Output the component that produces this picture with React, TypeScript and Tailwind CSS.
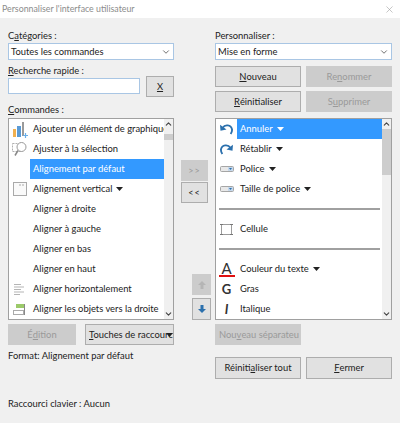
import type { ReactNode } from 'react';
import { ChevronDown, ChevronUp, X } from 'lucide-react';

const U = ({ children }: { children: ReactNode }) => <span className="underline underline-offset-1">{children}</span>;

const Caret = () => (
  <svg width="7" height="4" viewBox="0 0 7 4" className="ml-[4px] shrink-0">
    <path d="M0 0h7L3.500 4z" fill="currentColor" />
  </svg>
);

const ChartIcon = () => (
  <svg width="16" height="17" viewBox="0 0 16 17">
    <rect x="1" y="8" width="3" height="8" fill="#f0b050" />
    <rect x="5" y="5" width="4" height="11" fill="#5b9bd5" />
    <rect x="10" y="1" width="2" height="14" fill="#9a9a9a" />
    <path d="M11 14.500h5M13.500 12v5" stroke="#6aaee8" strokeWidth="1.200" />
  </svg>
);

const ZoomIcon = () => (
  <svg width="16" height="16" viewBox="0 0 16 16" fill="none">
    <rect x="0.500" y="2.500" width="9" height="8" stroke="#b0b0b0" strokeDasharray="2 1" />
    <circle cx="9.500" cy="6" r="4.500" fill="#fff" stroke="#999" />
    <path d="M6 9.500l-3 5" stroke="#888" strokeWidth="1.500" />
  </svg>
);

const PageIcon = () => (
  <svg width="14" height="14" viewBox="0 0 14 14" fill="none">
    <rect x="0.500" y="0.500" width="13" height="13" fill="#fafafa" stroke="#aaa" />
    <path d="M6 3h6" stroke="#aaa" strokeDasharray="2 1" />
  </svg>
);

const AlignIcon = () => (
  <svg width="11" height="11" viewBox="0 0 11 11">
    <path d="M0 .5h7M0 3h10M0 5.500h7M0 8h10M0 10.500h6" stroke="#b5b5b5" />
  </svg>
);

const ObjectsIcon = () => (
  <svg width="13" height="11" viewBox="0 0 13 11" fill="none">
    <rect x="3" y="0" width="8" height="4" fill="#9cca6a" />
    <rect x="0.500" y="6.500" width="10" height="4" fill="#fff" stroke="#aaa" />
    <path d="M11.500 0v11" stroke="#888" />
  </svg>
);

const UndoIcon = ({ flip }: { flip?: boolean }) => (
  <svg width="13" height="12" viewBox="0 0 14 13" fill="none" className={flip ? '-scale-x-100' : ''}>
    <path d="M3 5C5 1.500 12 1.500 13 7c.200 2-.500 3.500-1.500 5" stroke="#2b70ad" strokeWidth="2" />
    <path d="M0 2l.500 6.500L7 7z" fill="#2b70ad" />
  </svg>
);

const FieldIcon = () => (
  <svg width="14" height="6" viewBox="0 0 14 6">
    <rect x="0.500" y="0.500" width="13" height="5" rx="1" fill="#e8e8e8" stroke="#a5a5a5" />
    <rect x="8" y="1" width="5" height="4" fill="#c5d8ec" />
    <path d="M9 2h3L10.500 4z" fill="#2b70ad" />
  </svg>
);

const CellIcon = () => (
  <svg width="13" height="13" viewBox="0 0 13 13" fill="none">
    <rect x="1.500" y="1.500" width="10" height="10" stroke="#9c9c9c" />
    <path d="M0 1.500h3M0 11.500h3M10 1.500h3M10 11.500h3" stroke="#777" />
  </svg>
);

type Row = { label: string; icon?: ReactNode; caret?: boolean; active?: boolean; separator?: boolean };

const commands: Row[] = [
  { label: 'Ajouter un élément de graphique', icon: <ChartIcon /> },
  { label: 'Ajuster à la sélection', icon: <ZoomIcon /> },
  { label: 'Alignement par défaut', active: true },
  { label: 'Alignement vertical', icon: <PageIcon />, caret: true },
  { label: 'Aligner à droite' },
  { label: 'Aligner à gauche' },
  { label: 'Aligner en bas' },
  { label: 'Aligner en haut' },
  { label: 'Aligner horizontalement', icon: <AlignIcon /> },
  { label: 'Aligner les objets vers la droite', icon: <ObjectsIcon /> },
];

const toolbar: Row[] = [
  { label: 'Annuler', icon: <UndoIcon />, caret: true, active: true },
  { label: 'Rétablir', icon: <UndoIcon flip />, caret: true },
  { label: 'Police', icon: <FieldIcon />, caret: true },
  { label: 'Taille de police', icon: <FieldIcon />, caret: true },
  { label: '', separator: true },
  { label: 'Cellule', icon: <CellIcon /> },
  { label: '', separator: true },
  {
    label: 'Couleur du texte',
    caret: true,
    icon: (
      <span className="flex flex-col items-center text-[15px] leading-[13px] text-[#333]">
        A<span className="h-[2px] w-[16px] bg-[#e01010]" />
      </span>
    ),
  },
  { label: 'Gras', icon: <span className="text-[13px] font-bold text-[#333]">G</span> },
  { label: 'Italique', icon: <span className="text-[13px] font-bold italic text-[#333]">I</span> },
];

function ListBox({ rows, thumbTop, thumbHeight }: { rows: Row[]; thumbTop: string; thumbHeight: string }) {
  return (
    <div className="flex h-[202px] border border-[#a0a0a0] bg-white">
      <div className="min-w-0 flex-1 overflow-hidden">
        {rows.map((row, i) =>
          row.separator ? (
            <div key={i} className="flex h-[20px] items-center pl-[3px] pr-[2px]">
              <div className="h-[2px] w-full bg-[#a0a0a0]" />
            </div>
          ) : (
            <div key={i} className="flex h-[20px]">
              <div className="flex w-[21px] shrink-0 items-center justify-center">{row.icon}</div>
              <div
                className={`flex min-w-0 flex-1 items-center whitespace-nowrap pl-[3px] ${
                  row.active ? 'bg-[#3399ff] text-white' : ''
                }`}
              >
                {row.label}
                {row.caret && <Caret />}
              </div>
            </div>
          )
        )}
      </div>
      <div className="flex w-[9px] shrink-0 flex-col bg-[#f0f0f0]">
        <ChevronUp size={9} strokeWidth={3} className="h-[10px] shrink-0 text-[#444]" />
        <div className={`flex-1 ${thumbTop}`}>
          <div className={`bg-[#cdcdcd] ${thumbHeight}`} />
        </div>
        <ChevronDown size={9} strokeWidth={3} className="h-[10px] shrink-0 text-[#444]" />
      </div>
    </div>
  );
}

function Combo({ value }: { value: string }) {
  return (
    <div className="flex h-[17px] items-center justify-between border border-[#a9c6e4] bg-white pl-[2px] pr-[2px]">
      {value}
      <ChevronDown size={10} className="text-[#555]" />
    </div>
  );
}

function Btn({ children, disabled, className = '' }: { children: ReactNode; disabled?: boolean; className?: string }) {
  return (
    <div
      className={`flex h-[21px] items-center justify-center whitespace-nowrap border ${
        disabled ? 'border-[#cccccc] bg-[#cccccc] text-[#9a9a9a]' : 'border-[#adadad] bg-[#e1e1e1]'
      } ${className}`}
    >
      {children}
    </div>
  );
}

export default function App() {
  return (
    <div className="h-[423px] w-[400px] overflow-hidden bg-[#f0f0f0] font-['Lato',sans-serif] text-[9.400px] leading-[14px] text-[#222]">
      <div className="flex h-[18px] items-center justify-between bg-white pl-[2px] pr-[5px] text-[8.800px] text-[#8c8c8c]">
        <span>Personnaliser l'interface utilisateur</span>
        <X size={11} strokeWidth={1.2} className="text-[#999]" />
      </div>

      <div className="flex pl-[8px]">
        {/* Left column */}
        <div className="w-[166px] shrink-0">
          <div className="mt-[11px] h-[14px]">C<U>a</U>tégories :</div>
          <Combo value="Toutes les commandes" />
          <div className="mt-[4px] h-[14px]"><U>R</U>echerche rapide :</div>
          <div className="-mt-[2px] flex items-start justify-between">
            <div className="mt-[2px] h-[16px] w-[132px] border border-[#a9c6e4] bg-white" />
            <Btn className="w-[28px]"><U>X</U></Btn>
          </div>
          <div className="mt-[6px] h-[15px]"><U>C</U>ommandes :</div>
          <ListBox rows={commands} thumbTop="pt-[5px]" thumbHeight="h-[6px]" />
          <div className="mt-[4px] flex justify-between">
            <Btn disabled className="w-[68px]">É<U>d</U>ition</Btn>
            <Btn className="relative w-[89px] justify-start overflow-hidden pl-[3px]">
              <span><U>T</U>ouches de raccourc</span>
              <span className="absolute right-0 top-[8px] flex"><Caret /></span>
            </Btn>
          </div>
          <div className="mt-[4px]">Format: Alignement par défaut</div>
          <div className="mt-[34px]">Raccourci clavier : Aucun</div>
        </div>

        {/* Middle buttons */}
        <div className="flex w-[41px] shrink-0 flex-col pl-[7px] pt-[142px]">
          <Btn disabled className="w-[27px] text-[9px] tracking-[1px]">&gt;&gt;</Btn>
          <Btn className="mt-[1px] h-[21px] w-[27px] text-[9px] tracking-[1px]">&lt;&lt;</Btn>
          <Btn disabled className="ml-[11px] mt-[71px] w-[19px]">
            <svg width="8" height="8" viewBox="0 0 8 8"><path d="M4 0l4 4H5.500v4h-3V4H0z" fill="#b5b5b5" /></svg>
          </Btn>
          <Btn className="ml-[11px] mt-[3px] h-[22px] w-[19px]">
            <svg width="8" height="8" viewBox="0 0 8 8"><path d="M4 8L0 4h2.500V0h3v4H8z" fill="#2b70ad" /></svg>
          </Btn>
        </div>

        {/* Right column */}
        <div className="w-[177px] shrink-0">
          <div className="mt-[11px] h-[14px]">Personnaliser :</div>
          <Combo value="Mise en forme" />
          <div className="mt-[6px] grid grid-cols-2 gap-x-[5px] gap-y-[4px]">
            <Btn><U>N</U>ouveau</Btn>
            <Btn disabled>Re<U>n</U>ommer</Btn>
            <Btn><U>R</U>éinitialiser</Btn>
            <Btn disabled>S<U>u</U>pprimer</Btn>
          </div>
          <div className="mt-[6px]">
            <ListBox rows={toolbar} thumbTop="" thumbHeight="h-[46px]" />
          </div>
          <Btn disabled className="mt-[4px] w-[86px] justify-start overflow-hidden pl-[3px]">Nou<U>v</U>eau séparateu</Btn>
          <div className="mt-[12px] grid grid-cols-2 gap-x-[5px]">
            <Btn className="h-[22px]">Réiniti<U>a</U>liser tout</Btn>
            <Btn className="h-[22px]"><U>F</U>ermer</Btn>
          </div>
        </div>
      </div>
    </div>
  );
}
